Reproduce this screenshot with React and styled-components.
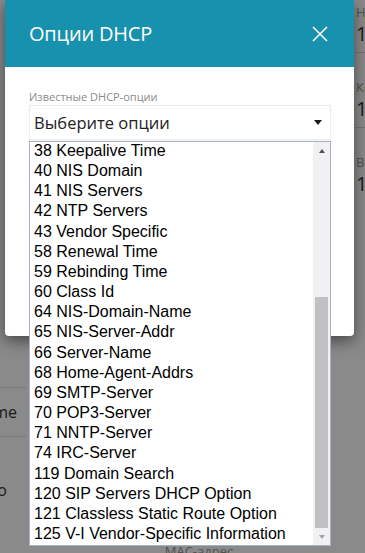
import React from 'react'
import styled, { createGlobalStyle } from 'styled-components'

const GlobalStyle = createGlobalStyle`
  html, body {
    margin: 0;
    padding: 0;
  }
  body {
    background: #fff;
    font-family: "Open Sans", sans-serif;
  }
`

const options = [
  '38 Keepalive Time',
  '40 NIS Domain',
  '41 NIS Servers',
  '42 NTP Servers',
  '43 Vendor Specific',
  '58 Renewal Time',
  '59 Rebinding Time',
  '60 Class Id',
  '64 NIS-Domain-Name',
  '65 NIS-Server-Addr',
  '66 Server-Name',
  '68 Home-Agent-Addrs',
  '69 SMTP-Server',
  '70 POP3-Server',
  '71 NNTP-Server',
  '74 IRC-Server',
  '119 Domain Search',
  '120 SIP Servers DHCP Option',
  '121 Classless Static Route Option',
  '125 V-I Vendor-Specific Information',
]

const Screen = styled.div`
  position: relative;
  width: 365px;
  height: 553px;
  overflow: hidden;
`

/* page underneath the dialog */
const Page = styled.div`
  display: grid;
  grid-template-columns: 26px 329px 10px;
  height: 100%;
  background: #fff;
`

const Column = styled.div`
  display: flex;
  flex-direction: column;
  overflow: hidden;
  white-space: nowrap;
`

const LeftRow = styled.div`
  box-sizing: border-box;
  height: ${p => p.$h}px;
  flex-shrink: 0;
  display: flex;
  align-items: ${p => (p.$top ? 'flex-start' : 'center')};
  justify-content: flex-end;
  padding-right: ${p => p.$pr || 0}px;
  padding-top: ${p => p.$pt || 0}px;
  border-bottom: ${p => (p.$line ? '1px solid #e2e2e2' : 'none')};
  font-size: 16px;
  color: #333;
`

const MidColumn = styled(Column)`
  padding-top: 543px;
  padding-left: 17px;
  align-items: center;
`

const MidLabel = styled.span`
  font-size: 13px;
  line-height: 16px;
  color: #999;
`

const Field = styled.div`
  box-sizing: border-box;
  height: ${p => p.$h}px;
  flex-shrink: 0;
  padding: ${p => p.$pt}px 0 0 1px;
  border-bottom: ${p => (p.$line ? '1px solid #d6d6d6' : 'none')};
`

const FieldLabel = styled.div`
  font-size: 13px;
  line-height: 16px;
  color: #999;
`

const FieldValue = styled.div`
  margin-top: 2px;
  font-size: 20px;
  line-height: 24px;
  color: #333;
`

const Overlay = styled.div`
  position: absolute;
  inset: 0;
  background: rgba(0, 0, 0, 0.46);
`

/* dialog */
const Modal = styled.div`
  position: absolute;
  left: 5px;
  top: 0;
  width: 349px;
  background: #fff;
  border-radius: 0 0 4px 4px;
  box-shadow: 0 5px 15px rgba(0, 0, 0, 0.5);
`

const Header = styled.div`
  height: 67px;
  display: flex;
  align-items: center;
  justify-content: space-between;
  padding: 0 26px 0 24px;
  background: #1791ad;
`

const Title = styled.h2`
  margin: 0;
  font-size: 20px;
  font-weight: 400;
  color: #fff;
  letter-spacing: -0.2px;
`

const Close = styled.button`
  display: flex;
  padding: 0;
  border: 0;
  background: none;
  cursor: pointer;
`

const Body = styled.div`
  height: 269px;
  box-sizing: border-box;
  padding: 22px 23px 0 24px;
`

const Label = styled.div`
  font-size: 11px;
  line-height: 15px;
  color: #8a8a8a;
  margin-bottom: 1px;
`

const SelectWrap = styled.div`
  position: relative;
  width: 302px;
`

const SelectBox = styled.div`
  box-sizing: border-box;
  height: 35px;
  display: flex;
  align-items: center;
  justify-content: space-between;
  padding: 0 8px 0 4px;
  border: 1px solid #ececec;
  box-shadow: 0 1px 2px rgba(0, 0, 0, 0.06);
  font-size: 16.5px;
  color: #222;
`

const Caret = styled.span`
  width: 0;
  height: 0;
  border-left: 4.5px solid transparent;
  border-right: 4.5px solid transparent;
  border-top: 5px solid #1a1a1a;
`

const ListBox = styled.div`
  position: absolute;
  left: 0;
  top: calc(100% + 1px);
  width: 302px;
  height: 405px;
  box-sizing: border-box;
  display: flex;
  border: 1px solid #a7b1c6;
  background: #fff;
`

const Options = styled.div`
  flex: 1;
  overflow: hidden;
`

const OptionList = styled.div`
  margin-top: -1px;
`

const Option = styled.div`
  height: 20.17px;
  line-height: 20px;
  padding-left: 4px;
  font-family: "Liberation Sans", Arial, sans-serif;
  font-size: 16px;
  color: #000;
  white-space: nowrap;
`

const Scrollbar = styled.div`
  width: 17px;
  display: flex;
  flex-direction: column;
  background: #f1f1f1;
`

const Arrow = styled.div`
  height: 17px;
  flex-shrink: 0;
  display: flex;
  align-items: center;
  justify-content: center;

  &::after {
    content: '';
    width: 0;
    height: 0;
    border-left: 3.5px solid transparent;
    border-right: 3.5px solid transparent;
    ${p => (p.$down
      ? `border-top: 4px solid ${p.$muted ? '#a3a3a3' : '#505050'};`
      : `border-bottom: 4px solid ${p.$muted ? '#a3a3a3' : '#505050'};`)}
  }
`

const Track = styled.div`
  flex: 1;
  display: flex;
  flex-direction: column;
  align-items: center;
`

const Thumb = styled.div`
  width: 13px;
  margin-top: ${p => p.$top}px;
  height: ${p => p.$h}px;
  background: #c1c1c1;
`

const CloseIcon = () => (
  <svg width="16" height="16" viewBox="0 0 16 16">
    <path d="M1 1 L15 15 M15 1 L1 15" stroke="#fff" strokeWidth="1.6" fill="none" />
  </svg>
)

export default function App() {
  return (
    <Screen>
      <GlobalStyle />
      <Page>
        <Column>
          <LeftRow $h={388} $line />
          <LeftRow $h={49} $line $pr={9}>Hostname</LeftRow>
          <LeftRow $h={100} $top $pt={42} $pr={19}>Авто</LeftRow>
        </Column>
        <MidColumn>
          <MidLabel>MAC-адрес</MidLabel>
        </MidColumn>
        <Column>
          <Field $h={53} $pt={4} $line>
            <FieldLabel>Начальный IP</FieldLabel>
            <FieldValue>192.168.0.2</FieldValue>
          </Field>
          <Field $h={75} $pt={26} $line>
            <FieldLabel>Конечный IP</FieldLabel>
            <FieldValue>192.168.0.100</FieldValue>
          </Field>
          <Field $h={75} $pt={26}>
            <FieldLabel>Время аренды</FieldLabel>
            <FieldValue>1440</FieldValue>
          </Field>
        </Column>
      </Page>
      <Overlay />
      <Modal>
        <Header>
          <Title>Опции DHCP</Title>
          <Close aria-label="Закрыть">
            <CloseIcon />
          </Close>
        </Header>
        <Body>
          <Label>Известные DHCP-опции</Label>
          <SelectWrap>
            <SelectBox>
              <span>Выберите опции</span>
              <Caret />
            </SelectBox>
            <ListBox>
              <Options>
                <OptionList>
                  {options.map(o => (
                    <Option key={o}>{o}</Option>
                  ))}
                </OptionList>
              </Options>
              <Scrollbar>
                <Arrow />
                <Track>
                  <Thumb $top={138} $h={231} />
                </Track>
                <Arrow $down $muted />
              </Scrollbar>
            </ListBox>
          </SelectWrap>
        </Body>
      </Modal>
    </Screen>
  )
}
